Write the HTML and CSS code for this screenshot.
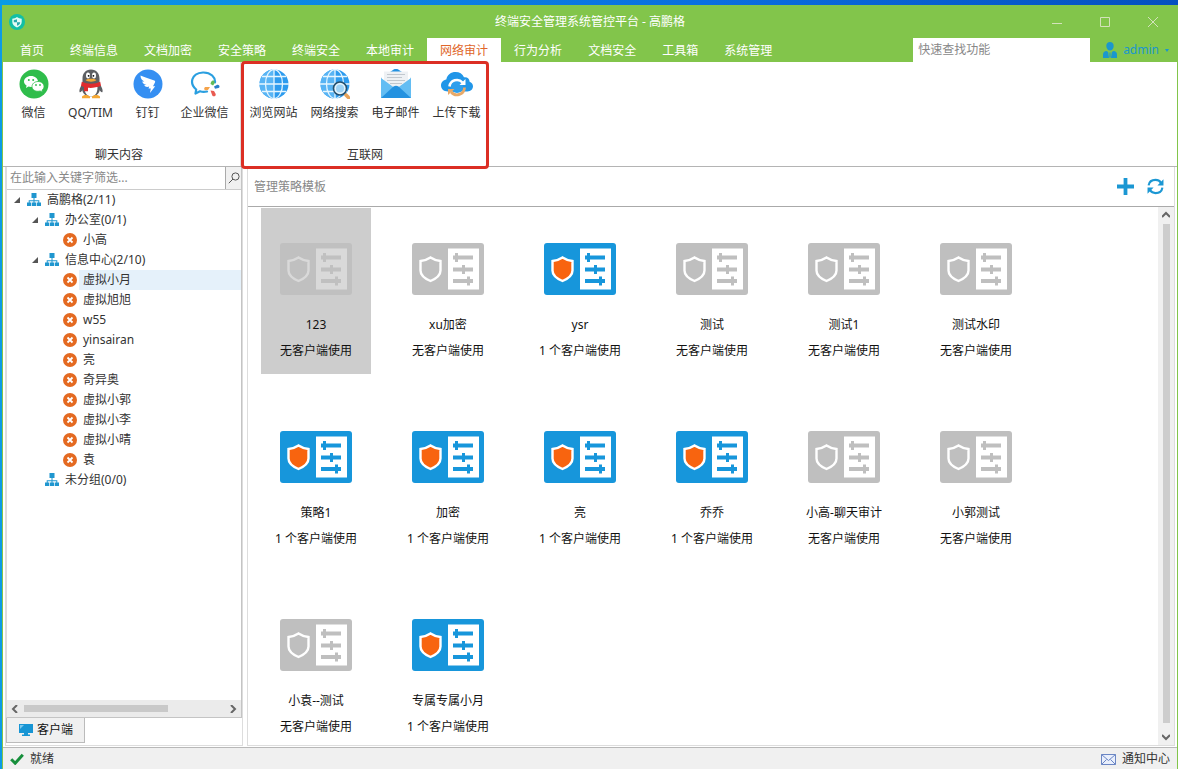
FILE: index.html
```html
<!DOCTYPE html>
<html lang="zh-CN">
<head>
    <meta charset="UTF-8">
    <title>终端安全管理系统管控平台</title>
    <link rel="stylesheet" href="styles.css">
</head>
<body>
<svg class="defs" aria-hidden="true">
    <symbol id="org" viewBox="0 0 14 14">
        <path fill="currentColor" d="M4.500 0h5v5h-5zM6.500 5h1v2.200h4.800V10h-1V8.200H7.500V10h-1V8.200H2.700V10h-1V7.200h4.800zM0 9.500h4.200V13H0zM4.900 9.500h4.200V13H4.900zM9.800 9.500H14V13H9.800z"/>
    </symbol>
    <symbol id="off" viewBox="0 0 14 14">
        <circle cx="7" cy="7" r="7" fill="#e46a21"/>
        <path d="M4.500 4.500l5 5M9.500 4.500l-5 5" stroke="#fff" stroke-width="1.800"/>
    </symbol>
    <symbol id="policy" viewBox="0 0 72 52">
        <rect width="72" height="52" rx="3" fill="currentColor"/>
        <path class="shield" d="M18.500 14.500c3 2 6 3.200 10 3.500v9.500c0 4.500-4 8-10 10.500-6-2.500-10-6-10-10.500V18c4-.3 7-1.500 10-3.500z" stroke-width="2.400"/>
        <path class="sheet" d="M36 5.500h31v41H36z"/>
        <path fill="currentColor" d="M41 12.500h2V10h3v2.500h15v4H46V19h-3v-2.500h-2zM41 24.500h9V22h3v2.500h8v4h-8V31h-3v-2.500h-9zM41 36h14v-2.500h3V36h3v4h-3v2.500h-3V40H41z"/>
    </symbol>
    <symbol id="globe" viewBox="0 0 30 30">
        <circle cx="15" cy="15" r="14.500" fill="#2d9bee"/>
        <path d="M15 .5A14.500 14.500 0 0 0 15 29.500" fill="#58b4f4"/>
        <g fill="none" stroke="#e6f6ff" stroke-width="1.300">
            <path d="M15 0v30M0 15h30M3 7.500h24M3 22.500h24"/>
            <ellipse cx="15" cy="15" rx="8.500" ry="14.500"/>
        </g>
    </symbol>
</svg>

<div class="window">
    <header class="titlebar">
        <svg class="logo" viewBox="0 0 16 16">
            <circle cx="8" cy="8" r="8" fill="#12bfa5"/>
            <path d="M8 3c1.500 1 3 1.500 4.700 1.700V8c0 2.700-2 4.400-4.700 5.500C5.300 12.400 3.300 10.700 3.300 8V4.700C5 4.500 6.500 4 8 3z" fill="#e4fbf5"/>
            <path d="M8 5.200v3H4.800V6c1.200-.1 2.200-.3 3.200-.8zM8 8.200h3.200c0 1.700-1.400 2.800-3.200 3.600z" fill="#28a9ad"/>
        </svg>
        <h1>终端安全管理系统管控平台 - 高鹏格</h1>
        <div class="controls">
            <button type="button" aria-label="最小化"><svg viewBox="0 0 10 10"><path d="M0 6.500h10"/></svg></button>
            <button type="button" aria-label="最大化"><svg viewBox="0 0 10 10"><path d="M.5.5h9v9h-9z"/></svg></button>
            <button type="button" aria-label="关闭"><svg viewBox="0 0 10 10"><path d="M0 0l10 10M10 0L0 10"/></svg></button>
        </div>
    </header>

    <div class="menubar">
        <nav>
            <a href="#">首页</a>
            <a href="#">终端信息</a>
            <a href="#">文档加密</a>
            <a href="#">安全策略</a>
            <a href="#">终端安全</a>
            <a href="#">本地审计</a>
            <a href="#" class="current">网络审计</a>
            <a href="#">行为分析</a>
            <a href="#">文档安全</a>
            <a href="#">工具箱</a>
            <a href="#">系统管理</a>
        </nav>
        <input class="quick" type="text" placeholder="快速查找功能" aria-label="快速查找功能">
        <button type="button" class="user">
            <svg viewBox="0 0 14 16"><path fill="currentColor" d="M7 0c2.200 0 3.700 1.600 3.700 4S9 8.600 7 8.600 3.300 6.400 3.300 4 4.800 0 7 0zM3.500 9L5.200 10 6 16H0v-3.500C0 10 1.500 9.300 3.500 9zM10.500 9L8.800 10 8 16h6v-3.500c0-2.500-1.500-3.200-3.500-3.500zM6.500 10.500h1L7.700 15l-.7 1-.7-1z"/></svg>
            <span>admin</span>
            <i class="caret"></i>
        </button>
    </div>

    <div class="ribbon">
        <section class="group chat">
            <div class="tools">
                <button type="button">
                    <svg viewBox="0 0 30 30">
                        <circle cx="15" cy="15" r="14.500" fill="#2fbd4b"/>
                        <path d="M12 7c4 0 7 2.500 7 5.500S16 18 12 18c-.9 0-1.700-.1-2.500-.4L7 19l.6-2.400C6 15.600 5 14.100 5 12.500 5 9.500 8 7 12 7z" fill="#fff"/>
                        <path d="M19 12.500c3.400 0 6 2.200 6 5 0 1.500-.8 2.800-2 3.700l.5 2-2.300-1.200c-.7.200-1.400.3-2.200.3-3.400 0-6-2.100-6-4.800s2.600-5 6-5z" fill="#fff" stroke="#2fbd4b" stroke-width=".8"/>
                        <g fill="#2fbd4b"><circle cx="9.800" cy="11" r="1"/><circle cx="14.200" cy="11" r="1"/><circle cx="17" cy="16" r=".9"/><circle cx="21" cy="16" r=".9"/></g>
                    </svg>
                    <span>微信</span>
                </button>
                <button type="button">
                    <svg viewBox="0 0 30 30">
                        <path d="M6.500 15C4 18 3 21 3.500 23c1 .8 2.500-1 3.500-3zM23.500 15c2.500 3 3.500 6 3 8-1 .8-2.500-1-3.500-3z" fill="#5d5f63"/>
                        <path d="M15 .5c5.500 0 8.500 4 8.500 9v5C25 20 24 27.500 15 27.500S5 20 6.500 14.500v-5c0-5 3-9 8.500-9z" fill="#5d5f63"/>
                        <path d="M8.500 18c0 6 2.500 9.500 6.500 9.500s6.500-3.500 6.500-9.500z" fill="#fff"/>
                        <ellipse cx="12" cy="6.500" rx="2" ry="3" fill="#fff"/><ellipse cx="18" cy="6.500" rx="2" ry="3" fill="#fff"/>
                        <circle cx="12.600" cy="6.800" r=".9"/><circle cx="17.400" cy="6.800" r=".9"/>
                        <path d="M9.500 11c3-1.600 8-1.600 11 0-2 2.300-9 2.300-11 0zM6 27.500c1-2 6-2.300 8 0v1.700H6zM16 27.500c2-2.300 7-2 8 0v1.700h-8z" fill="#f5a834"/>
                        <path d="M5.800 12.800c5 2.600 13.400 2.600 18.400 0l.8 4c-4 1.800-9 2.300-13 2v3.400H8v-4.300l-3-1.200z" fill="#e02b2d"/>
                    </svg>
                    <span>QQ/TIM</span>
                </button>
                <button type="button">
                    <svg viewBox="0 0 30 30">
                        <circle cx="15" cy="15" r="14.500" fill="#358ff2"/>
                        <path d="M7.500 6.500c4 2 9 3.200 13.800 5 1.200.5 1 1.500.4 2.600L20 17.300h2.200L17 24l.8-4.400h-2.300l.7-2c-2.500.7-4 .1-5-1.400l2.300-.4c-2.300-.5-3.800-1.600-4.300-3.400l2.200.2c-2.300-1.300-4-3.200-3.900-6.100z" fill="#fff"/>
                    </svg>
                    <span>钉钉</span>
                </button>
                <button type="button">
                    <svg viewBox="0 0 30 30">
                        <path d="M17 22.500c-2 .5-5 .5-7-.2L5.500 24.500l.7-4C-.5 15 .5 4.500 13 3.500c8-.2 12.500 5 12 10" fill="none" stroke="#2a9fe0" stroke-width="2.200" stroke-linejoin="round" stroke-linecap="round"/>
                        <path d="M20.500 15c.5-2.500 1.500-4 3.500-3.200 1.500 1 .5 3-1 4.700z" fill="#63bb56"/>
                        <path d="M24 17.500l3.200-1.700c2-.5 3.300 2.500 1.300 3.300L25 19.700z" fill="#2a7fc8"/>
                        <path d="M20.500 21.500l3.500.5 1.700 3c.5 2.500-2.500 3-3.400 1.500z" fill="#e95a50"/>
                        <path d="M20 18l-2 3-2.800.3c-1.500-.6-1.300-3.300.5-3.300z" fill="#f5a34a"/>
                    </svg>
                    <span>企业微信</span>
                </button>
            </div>
            <h2>聊天内容</h2>
        </section>
        <section class="group internet">
            <div class="tools">
                <button type="button">
                    <svg viewBox="0 0 30 30"><use href="#globe"/></svg>
                    <span>浏览网站</span>
                </button>
                <button type="button">
                    <svg viewBox="0 0 30 30">
                        <use href="#globe"/>
                        <path d="M26 26l3 3" stroke="#e8a35a" stroke-width="3.600" stroke-linecap="round"/>
                        <circle cx="20" cy="19.500" r="6.500" fill="#e4f4fd" stroke="#25506f" stroke-width="1.600"/>
                        <circle cx="20" cy="19.500" r="4" fill="#9fd3f5"/>
                    </svg>
                    <span>网络搜索</span>
                </button>
                <button type="button">
                    <svg viewBox="0 0 30 30">
                        <path d="M0 9L12 1c2-1.500 4-1.500 6 0l12 8v20H0z" fill="#2492e0"/>
                        <path d="M0 9l3-4v9zM30 9l-3-4v9z" fill="#fff"/>
                        <path d="M3 2.500h24V20H3z" fill="#eef1f4"/>
                        <path d="M6 5.500h18M6 8.500h15M6 11.500h18M9 14.500h12" stroke="#c2c8ce"/>
                        <path d="M0 9l15 11L30 9v20H0z" fill="#63bdf3"/>
                        <path d="M0 29l12.500-11.500c1.500-1 3.500-1 5 0L30 29z" fill="#2492e0"/>
                    </svg>
                    <span>电子邮件</span>
                </button>
                <button type="button">
                    <svg viewBox="0 0 32 30" class="cloud">
                        <path d="M7 22.500C2.500 22.500 0 19.500 0 16.500c0-3.300 2.300-5.500 5.300-6C6.300 5.500 10 3 14.500 3c4 0 7 1.800 8.500 5.200 3.300-.5 5.600 1.600 5.600 4.500 2 .6 3.400 2.300 3.400 4.600 0 3-2.400 5.200-5.500 5.200z" fill="#2196e8"/>
                        <circle cx="16" cy="18" r="6" fill="#2e9fec"/>
                        <path d="M8.500 17.500a7.500 7.500 0 0 1 13-4" fill="none" stroke="#fff" stroke-width="2.600"/>
                        <path d="M18.500 16H24.500v-6z" fill="#fff"/>
                        <path d="M23.500 18.500a7.500 7.500 0 0 1-13.300 4.500" fill="none" stroke="#e8a968" stroke-width="2.800"/>
                        <path d="M13.500 20H7v6z" fill="#e8a968"/>
                    </svg>
                    <span>上传下载</span>
                </button>
            </div>
            <h2>互联网</h2>
        </section>
    </div>

    <div class="content">
        <aside class="sidebar">
            <div class="tree-box">
                <form class="filter">
                    <input type="text" placeholder="在此输入关键字筛选..." aria-label="在此输入关键字筛选">
                    <button type="button" aria-label="筛选"><svg viewBox="0 0 12 12"><circle cx="7.500" cy="4.500" r="3.600"/><path d="M5 7L.8 11.200"/></svg></button>
                </form>
                <ul class="tree">
                    <li>
                        <div class="row"><i class="fold open"></i><svg><use href="#org"/></svg><span>高鹏格(2/11)</span></div>
                        <ul>
                            <li>
                                <div class="row"><i class="fold open"></i><svg><use href="#org"/></svg><span>办公室(0/1)</span></div>
                                <ul>
                                    <li class="row"><i class="fold"></i><svg><use href="#off"/></svg><span>小高</span></li>
                                </ul>
                            </li>
                            <li>
                                <div class="row"><i class="fold open"></i><svg><use href="#org"/></svg><span>信息中心(2/10)</span></div>
                                <ul>
                                    <li class="row active"><i class="fold"></i><svg><use href="#off"/></svg><span>虚拟小月</span></li>
                                    <li class="row"><i class="fold"></i><svg><use href="#off"/></svg><span>虚拟旭旭</span></li>
                                    <li class="row"><i class="fold"></i><svg><use href="#off"/></svg><span>w55</span></li>
                                    <li class="row"><i class="fold"></i><svg><use href="#off"/></svg><span>yinsairan</span></li>
                                    <li class="row"><i class="fold"></i><svg><use href="#off"/></svg><span>亮</span></li>
                                    <li class="row"><i class="fold"></i><svg><use href="#off"/></svg><span>奇异奥</span></li>
                                    <li class="row"><i class="fold"></i><svg><use href="#off"/></svg><span>虚拟小郭</span></li>
                                    <li class="row"><i class="fold"></i><svg><use href="#off"/></svg><span>虚拟小李</span></li>
                                    <li class="row"><i class="fold"></i><svg><use href="#off"/></svg><span>虚拟小晴</span></li>
                                    <li class="row"><i class="fold"></i><svg><use href="#off"/></svg><span>袁</span></li>
                                </ul>
                            </li>
                            <li>
                                <div class="row"><i class="fold"></i><svg><use href="#org"/></svg><span>未分组(0/0)</span></div>
                            </li>
                        </ul>
                    </li>
                </ul>
                <div class="scroll-x">
                    <svg viewBox="0 0 8 8"><path d="M6 0L2 4l4 4"/></svg>
                    <div class="track"><div class="thumb"></div></div>
                    <svg viewBox="0 0 8 8"><path d="M2 0l4 4-4 4"/></svg>
                </div>
            </div>
            <button type="button" class="side-tab">
                <svg viewBox="0 0 14 12"><path fill="#1795d4" d="M0 0h14v9H0zM5 9h4v1.500h2V12H3v-1.500h2z"/><path d="M1 5L5 1H1z" fill="#7cc8ee"/></svg>
                <span>客户端</span>
            </button>
        </aside>

        <main class="panel">
            <div class="panel-head">
                <h2>管理策略模板</h2>
                <button type="button" aria-label="添加"><svg viewBox="0 0 18 18"><path fill="currentColor" d="M7 0h4v7h7v4h-7v7H7v-7H0V7h7z"/></svg></button>
                <button type="button" aria-label="刷新"><svg viewBox="0 0 16 16"><path d="M1.500 7C2 4 4.500 1.800 8 1.800c2.200 0 4 1 5.200 2.700M14.500 9c-.5 3-3 5.200-6.500 5.200-2.200 0-4-1-5.200-2.700" fill="none" stroke="currentColor" stroke-width="2"/><path d="M15.500 1.200V7H9.800zM.5 14.800V9h5.700z" fill="currentColor"/></svg></button>
            </div>
            <div class="panel-body">
                <div class="tiles">
                    <button type="button" class="tile selected"><svg><use href="#policy"/></svg><span>123</span><span>无客户端使用</span></button>
                    <button type="button" class="tile"><svg><use href="#policy"/></svg><span>xu加密</span><span>无客户端使用</span></button>
                    <button type="button" class="tile used"><svg><use href="#policy"/></svg><span>ysr</span><span>1 个客户端使用</span></button>
                    <button type="button" class="tile"><svg><use href="#policy"/></svg><span>测试</span><span>无客户端使用</span></button>
                    <button type="button" class="tile"><svg><use href="#policy"/></svg><span>测试1</span><span>无客户端使用</span></button>
                    <button type="button" class="tile"><svg><use href="#policy"/></svg><span>测试水印</span><span>无客户端使用</span></button>
                    <button type="button" class="tile used"><svg><use href="#policy"/></svg><span>策略1</span><span>1 个客户端使用</span></button>
                    <button type="button" class="tile used"><svg><use href="#policy"/></svg><span>加密</span><span>1 个客户端使用</span></button>
                    <button type="button" class="tile used"><svg><use href="#policy"/></svg><span>亮</span><span>1 个客户端使用</span></button>
                    <button type="button" class="tile used"><svg><use href="#policy"/></svg><span>乔乔</span><span>1 个客户端使用</span></button>
                    <button type="button" class="tile"><svg><use href="#policy"/></svg><span>小高-聊天审计</span><span>无客户端使用</span></button>
                    <button type="button" class="tile"><svg><use href="#policy"/></svg><span>小郭测试</span><span>无客户端使用</span></button>
                    <button type="button" class="tile"><svg><use href="#policy"/></svg><span>小袁--测试</span><span>无客户端使用</span></button>
                    <button type="button" class="tile used"><svg><use href="#policy"/></svg><span>专属专属小月</span><span>1 个客户端使用</span></button>
                </div>
                <div class="scroll-y">
                    <svg viewBox="0 0 8 8"><path d="M0 6l4-4 4 4"/></svg>
                    <div class="track"><div class="thumb"></div></div>
                    <svg viewBox="0 0 8 8"><path d="M0 2l4 4 4-4"/></svg>
                </div>
            </div>
        </main>
    </div>

    <footer class="status">
        <svg class="ok" viewBox="0 0 14 12"><path d="M1.200 6.200l4 4L12.800 1.800" fill="none" stroke="#178f3c" stroke-width="3"/></svg>
        <span>就绪</span>
        <button type="button" class="notice">
            <svg viewBox="0 0 15 11"><path d="M.5.5h14v10H.5z" fill="#e9effc" stroke="#6b86c4"/><path d="M.5.5l7 6 7-6M.5 10.500l5-5M14.500 10.500l-5-5" fill="none" stroke="#6b86c4"/></svg>
            <span>通知中心</span>
        </button>
    </footer>
</div>
</body>
</html>
```
FILE: styles.css
```css
*{
    margin: 0;
    padding: 0;
    box-sizing: border-box;
}
body{
    height: 100vh;
    padding: 5px 0 0 2px;
    background: linear-gradient(to right, #0b9be6, #0a6fe0 60%, #0450c0);
    font-family: "Noto Sans", "Noto Sans CJK SC", sans-serif;
    font-size: 12px;
    line-height: 20px;
    color: #333;
    overflow: hidden;
}
button, input{
    font: inherit;
    color: inherit;
    border: none;
    background: none;
}
button{
    cursor: pointer;
}
h1, h2{
    font-size: 12px;
    font-weight: normal;
}
ul{
    list-style: none;
}
svg{
    display: block;
    flex: none;
}
.defs{
    position: absolute;
    width: 0;
    height: 0;
}
.window{
    height: 100%;
    display: flex;
    flex-direction: column;
    border: 1px solid #82c54b;
    border-width: 0 1px;
    background-color: #fff;
}

/* 标题栏 */
.titlebar{
    display: grid;
    grid-template-columns: 1fr auto 1fr;
    align-items: center;
    height: 33px;
    padding-left: 6px;
    background-color: #82c54b;
    color: #fff;
}
.titlebar h1{
    padding-right: 6px;
}
.logo{
    width: 16px;
    height: 16px;
}
.controls{
    display: flex;
    justify-content: flex-end;
}
.controls button{
    width: 48px;
    height: 32px;
    display: flex;
    align-items: center;
    justify-content: center;
}
.controls svg{
    width: 10px;
    height: 10px;
    fill: none;
    stroke: #d3e2bb;
}

/* 菜单 */
.menubar{
    display: flex;
    height: 24px;
    padding-left: 4px;
    background-color: #82c54b;
}
.menubar nav{
    display: flex;
    flex: 1;
}
.menubar a{
    padding: 0 13px;
    line-height: 25px;
    color: #fff;
    text-decoration: none;
    white-space: nowrap;
}
.menubar .current{
    background-color: #fff;
    color: #e0662a;
}
.quick{
    width: 177px;
    padding: 0 5px;
    background-color: #fff;
}
.quick::placeholder{
    color: #888;
    opacity: 1;
}
.user{
    display: flex;
    align-items: center;
    gap: 6px;
    padding: 0 8px 0 13px;
    color: #1b97cd;
}
.user svg{
    width: 14px;
    height: 16px;
}
.caret{
    border: 2px solid transparent;
    border-top: 3px solid #1b97cd;
    border-bottom: none;
}

/* 工具区 */
.ribbon{
    display: flex;
    height: 105px;
    border-bottom: 1px solid #b4b4b4;
}
.group{
    position: relative;
    display: flex;
    flex-direction: column;
    justify-content: space-between;
    padding: 7px 2px 1px;
    text-align: center;
}
.chat{
    padding-right: 7px;
    border-right: 1px solid #ddd;
}
.group button{
    width: 57px;
}
.internet button{
    width: 61px;
}
/* 红框标出互联网分组 */
.internet::after{
    content: "";
    position: absolute;
    inset: -1px 0 -3px 0;
    border: 3px solid #dc2f24;
    border-radius: 4px;
    pointer-events: none;
}
.tools{
    display: flex;
}
.tools svg{
    width: 30px;
    height: 30px;
    margin: 0 auto 4px;
}
.tools .cloud{
    width: 32px;
}

/* 内容 */
.content{
    flex: 1;
    min-height: 0;
    display: flex;
    gap: 4px;
    padding: 0 2px 1px 2px;
}
.sidebar{
    width: 238px;
    display: flex;
    flex-direction: column;
    align-items: flex-start;
    padding-bottom: 2px;
    border: 1px solid #ddd;
    border-top: none;
}
.tree-box{
    flex: 1;
    width: 100%;
    display: flex;
    flex-direction: column;
    border: 1px solid #c4c4c4;
    border-top: none;
    border-left-color: #ddd;
}
.filter{
    display: flex;
    height: 23px;
    border-bottom: 1px solid #ccc;
}
.filter input{
    flex: 1;
    min-width: 0;
    padding: 0 3px;
}
.filter input::placeholder{
    color: #888;
    opacity: 1;
}
.filter button{
    width: 16px;
    display: flex;
    align-items: center;
    justify-content: center;
    border-left: 1px solid #aaa;
    background-color: #f0f0f0;
}
.filter svg{
    width: 12px;
    height: 12px;
    fill: none;
    stroke: #555;
}
.tree{
    flex: 1;
}
.tree ul{
    padding-left: 18px;
}
.row{
    display: flex;
    align-items: center;
    height: 20px;
    color: #333;
}
.row svg{
    width: 14px;
    height: 14px;
    color: #1f96cf;
}
.row span{
    flex: 1;
    margin-left: 2px;
    padding-left: 4px;
}
.active span{
    background-color: #e5f1fa;
}
.fold{
    width: 20px;
    height: 6px;
}
.open::before{
    content: "";
    display: block;
    width: 0;
    margin-left: 7px;
    border-left: 6px solid transparent;
    border-bottom: 6px solid #555;
}
.scroll-x{
    display: flex;
    align-items: center;
    gap: 5px;
    height: 17px;
    padding: 0 4px;
    background-color: #ebebeb;
}
.scroll-x .track{
    flex: 1;
}
.scroll-x .thumb{
    width: 72%;
    height: 7px;
    background-color: #c9c9c9;
}
.scroll-x svg, .scroll-y svg{
    width: 8px;
    height: 8px;
    fill: none;
    stroke: #666;
    stroke-width: 2;
}
.side-tab{
    display: flex;
    align-items: center;
    gap: 4px;
    height: 25px;
    padding: 0 11px 0 12px;
    border: 1px solid #bbb;
    border-top: none;
    background-color: #f0f0f0;
    color: #111;
}
.side-tab svg{
    width: 14px;
    height: 12px;
}
.panel{
    flex: 1;
    min-width: 0;
    display: flex;
    flex-direction: column;
    border: 1px solid #ddd;
    border-top: none;
}
.panel-head{
    display: flex;
    align-items: center;
    gap: 13px;
    height: 40px;
    padding: 0 10px 0 6px;
    border-bottom: 1px solid #aaa;
}
.panel-head h2{
    flex: 1;
    color: #888;
}
.panel-head button{
    color: #1b97d3;
}
.panel-head svg{
    width: 17px;
    height: 17px;
}
.panel-body{
    flex: 1;
    min-height: 0;
    display: flex;
}
.tiles{
    flex: 1;
    display: grid;
    grid-template-columns: repeat(auto-fill, 110px);
    align-content: start;
    gap: 22px;
    padding: 1px 0 0 13px;
    overflow: hidden;
}
.tile{
    display: flex;
    flex-direction: column;
    align-items: center;
    height: 166px;
    padding-top: 35px;
    line-height: 26px;
    color: #111;
    white-space: nowrap;
}
.tile svg{
    width: 72px;
    height: 52px;
    margin-bottom: 17px;
    color: #bfbfbf;
    fill: #bfbfbf;
    stroke: #fff;
}
.tile use{
    stroke-width: 0;
}
.sheet{
    fill: #fff;
    stroke: none;
}
.used svg{
    color: #1796db;
    fill: #f8640f;
}
.selected{
    background-color: #cdcdcd;
}
.selected svg{
    opacity: .25;
    color: #9a9a9a;
    fill: #9a9a9a;
}
.scroll-y{
    width: 16px;
    display: flex;
    flex-direction: column;
    align-items: center;
    gap: 5px;
    padding: 4px 0;
    background-color: #f0f0f0;
}
.scroll-y .track{
    flex: 1;
}
.scroll-y .thumb{
    width: 7px;
    height: 99%;
    background-color: #cdcdcd;
}

/* 状态栏 */
.status{
    display: flex;
    align-items: center;
    height: 22px;
    padding: 1px 7px 0;
    border-top: 1px solid #b8b8b8;
    background-color: #f0f0f0;
}
.status .ok{
    width: 14px;
    height: 12px;
    margin-right: 6px;
}
.notice{
    display: flex;
    align-items: center;
    gap: 6px;
    margin-left: auto;
}
.notice svg{
    width: 15px;
    height: 11px;
}
```
